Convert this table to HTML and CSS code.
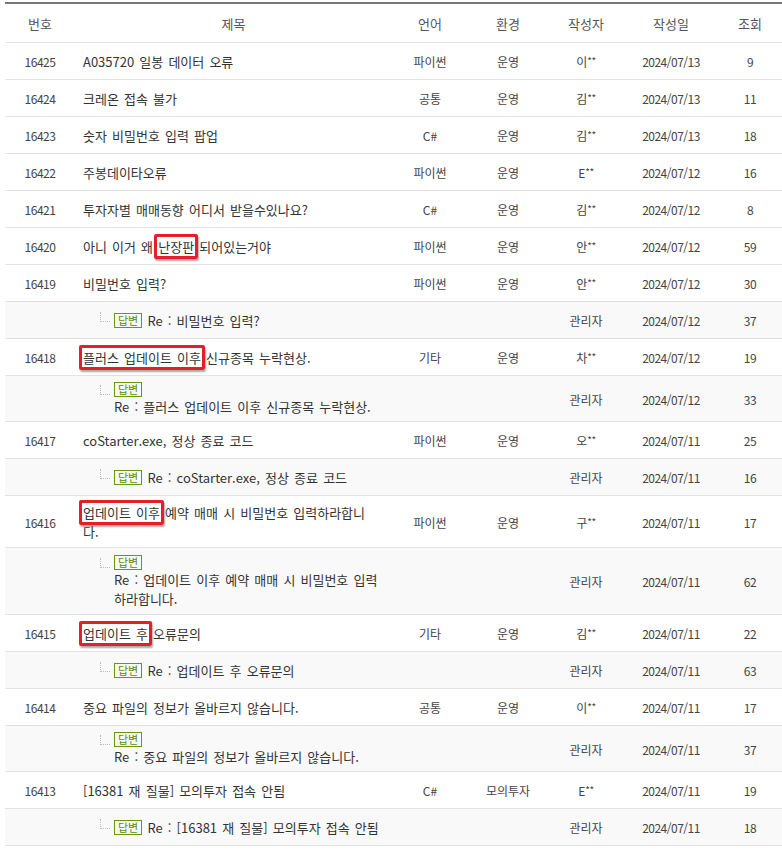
FILE: index.html
```html
<!DOCTYPE html>
<html lang="ko">
<head>
<meta charset="utf-8">
<link rel="stylesheet" href="styles.css">
</head>
<body>
<div class="wrap">
<table class="board">
<colgroup>
<col class="c-no"><col class="c-title"><col class="c-lang"><col class="c-env"><col class="c-writer"><col class="c-date"><col class="c-view">
</colgroup>
<thead>
<tr><th>번호</th><th>제목</th><th>언어</th><th>환경</th><th>작성자</th><th>작성일</th><th>조회</th></tr>
</thead>
<tbody>
<tr><td class="no">16425</td><td class="title">A035720 일봉 데이터 오류</td><td>파이썬</td><td>운영</td><td>이<span class="ast">**</span></td><td class="num">2024/07/13</td><td class="num">9</td></tr>
<tr><td class="no">16424</td><td class="title">크레온 접속 불가</td><td>공통</td><td>운영</td><td>김<span class="ast">**</span></td><td class="num">2024/07/13</td><td class="num">11</td></tr>
<tr><td class="no">16423</td><td class="title">숫자 비밀번호 입력 팝업</td><td>C#</td><td>운영</td><td>김<span class="ast">**</span></td><td class="num">2024/07/13</td><td class="num">18</td></tr>
<tr><td class="no">16422</td><td class="title">주봉데이타오류</td><td>파이썬</td><td>운영</td><td>E<span class="ast">**</span></td><td class="num">2024/07/12</td><td class="num">16</td></tr>
<tr><td class="no">16421</td><td class="title">투자자별 매매동향 어디서 받을수있나요?</td><td>C#</td><td>운영</td><td>김<span class="ast">**</span></td><td class="num">2024/07/12</td><td class="num">8</td></tr>
<tr><td class="no">16420</td><td class="title">아니 이거 왜 <span class="hl">난장판</span> 되어있는거야</td><td>파이썬</td><td>운영</td><td>안<span class="ast">**</span></td><td class="num">2024/07/12</td><td class="num">59</td></tr>
<tr><td class="no">16419</td><td class="title">비밀번호 입력?</td><td>파이썬</td><td>운영</td><td>안<span class="ast">**</span></td><td class="num">2024/07/12</td><td class="num">30</td></tr>
<tr class="reply"><td></td><td class="title"><div class="re"><span class="ln"></span><div class="rb"><span class="badge">답변</span> Re : 비밀번호 입력?</div></div></td><td></td><td></td><td>관리자</td><td class="num">2024/07/12</td><td class="num">37</td></tr>
<tr><td class="no">16418</td><td class="title"><span class="hl">플러스 업데이트 이후</span> 신규종목 누락현상.</td><td>기타</td><td>운영</td><td>차<span class="ast">**</span></td><td class="num">2024/07/12</td><td class="num">19</td></tr>
<tr class="reply multi"><td></td><td class="title"><div class="re stack"><span class="ln"></span><div class="rb"><span class="badge">답변</span><div class="rt">Re : 플러스 업데이트 이후 신규종목 누락현상.</div></div></div></td><td></td><td></td><td>관리자</td><td class="num">2024/07/12</td><td class="num">33</td></tr>
<tr><td class="no">16417</td><td class="title">coStarter.exe, 정상 종료 코드</td><td>파이썬</td><td>운영</td><td>오<span class="ast">**</span></td><td class="num">2024/07/11</td><td class="num">25</td></tr>
<tr class="reply"><td></td><td class="title"><div class="re"><span class="ln"></span><div class="rb"><span class="badge">답변</span> Re : coStarter.exe, 정상 종료 코드</div></div></td><td></td><td></td><td>관리자</td><td class="num">2024/07/11</td><td class="num">16</td></tr>
<tr class="multi"><td class="no">16416</td><td class="title"><span class="hl">업데이트 이후</span> 예약 매매 시 비밀번호 입력하라합니<br>다.</td><td>파이썬</td><td>운영</td><td>구<span class="ast">**</span></td><td class="num">2024/07/11</td><td class="num">17</td></tr>
<tr class="reply tall"><td></td><td class="title"><div class="re stack"><span class="ln"></span><div class="rb"><span class="badge">답변</span><div class="rt">Re : 업데이트 이후 예약 매매 시 비밀번호 입력<br>하라합니다.</div></div></div></td><td></td><td></td><td>관리자</td><td class="num">2024/07/11</td><td class="num">62</td></tr>
<tr><td class="no">16415</td><td class="title"><span class="hl">업데이트 후</span> 오류문의</td><td>기타</td><td>운영</td><td>김<span class="ast">**</span></td><td class="num">2024/07/11</td><td class="num">22</td></tr>
<tr class="reply"><td></td><td class="title"><div class="re"><span class="ln"></span><div class="rb"><span class="badge">답변</span> Re : 업데이트 후 오류문의</div></div></td><td></td><td></td><td>관리자</td><td class="num">2024/07/11</td><td class="num">63</td></tr>
<tr><td class="no">16414</td><td class="title">중요 파일의 정보가 올바르지 않습니다.</td><td>공통</td><td>운영</td><td>이<span class="ast">**</span></td><td class="num">2024/07/11</td><td class="num">17</td></tr>
<tr class="reply multi"><td></td><td class="title"><div class="re stack"><span class="ln"></span><div class="rb"><span class="badge">답변</span><div class="rt">Re : 중요 파일의 정보가 올바르지 않습니다.</div></div></div></td><td></td><td></td><td>관리자</td><td class="num">2024/07/11</td><td class="num">37</td></tr>
<tr><td class="no">16413</td><td class="title">[16381 재 질물] 모의투자 접속 안됨</td><td>C#</td><td>모의투자</td><td>E<span class="ast">**</span></td><td class="num">2024/07/11</td><td class="num">19</td></tr>
<tr class="reply"><td></td><td class="title"><div class="re"><span class="ln"></span><div class="rb"><span class="badge">답변</span> Re : [16381 재 질물] 모의투자 접속 안됨</div></div></td><td></td><td></td><td>관리자</td><td class="num">2024/07/11</td><td class="num">18</td></tr>
</tbody>
</table>
</div>
</body>
</html>
```
FILE: styles.css
```css
html, body {
  margin: 0;
  padding: 0;
  background: #fff;
}
body {
  font-family: "Noto Sans CJK KR", "Noto Sans", sans-serif;
  color: #444;
}
.wrap {
  padding: 2px 0 0 5px;
}
.board {
  width: 777px;
  border-collapse: collapse;
  table-layout: fixed;
  border-top: 2px solid #777;
}
.c-no { width: 70px; }
.c-title { width: 317px; }
.c-lang { width: 76px; }
.c-env { width: 80px; }
.c-writer { width: 76px; }
.c-date { width: 94px; }
.c-view { width: 64px; }

.board th {
  height: 38px;
  font-size: 13px;
  font-weight: normal;
  color: #555;
  text-align: center;
  border-bottom: 1px solid #e3e3e3;
  padding: 0;
}
.board td {
  height: 37px;
  box-sizing: border-box;
  padding: 7px 0;
  font-size: 12px;
  line-height: 19px;
  text-align: center;
  vertical-align: middle;
  color: #444;
  border-bottom: 1px solid #e3e3e3;
}
.board td.no,
.board td.num {
  color: #444;
  letter-spacing: -0.5px;
}
.ast {
  font-size: 10px;
  line-height: 10px;
  vertical-align: 2px;
  letter-spacing: -0.5px;
}
.board td.title {
  text-align: left;
  padding-left: 8px;
  padding-right: 4px;
  font-size: 13px;
  word-spacing: 1.5px;
  color: #333;
  white-space: nowrap;
}
.board tr.reply td {
  background: #f9f9f9;
  padding-top: 6px;
  padding-bottom: 6px;
}
.board tr.multi td {
  padding-top: 7px;
  padding-bottom: 6px;
}
.board tr.reply.multi td {
  padding-top: 6px;
  padding-bottom: 5px;
}
.board tr.reply.tall td {
  padding-top: 7px;
  padding-bottom: 6px;
}
.re {
  display: flex;
  align-items: center;
  padding-left: 17px;
}
.rb {
  height: 19px;
  line-height: 19px;
}
.re.stack {
  align-items: flex-start;
}
.re.stack .rb {
  height: auto;
}
.re.stack .ln {
  margin-top: 3px;
}
.rt {
  line-height: 19px;
}
.ln {
  flex: none;
  width: 10px;
  height: 10px;
  margin-right: 4px;
  margin-top: -6px;
  border-left: 1px dotted #bbb;
  border-bottom: 1px dotted #bbb;
  box-sizing: border-box;
}
.badge {
  display: inline-block;
  height: 15px;
  box-sizing: border-box;
  font-size: 11px;
  line-height: 13px;
  padding: 0 3px;
  border: 1px solid #669a0e;
  color: #5b8d00;
  vertical-align: top;
  margin-top: 2px;
  word-spacing: 0;
}
.re.stack .badge {
  display: block;
  width: max-content;
  margin-top: 0;
}
.hl {
  border: 3px solid #e41e2b;
  border-radius: 2px;
  padding: 0 1px;
  margin: 0 -4px;
  box-shadow: 1px 2px 2px rgba(0, 0, 0, 0.35);
  background: #fff;
}
```
